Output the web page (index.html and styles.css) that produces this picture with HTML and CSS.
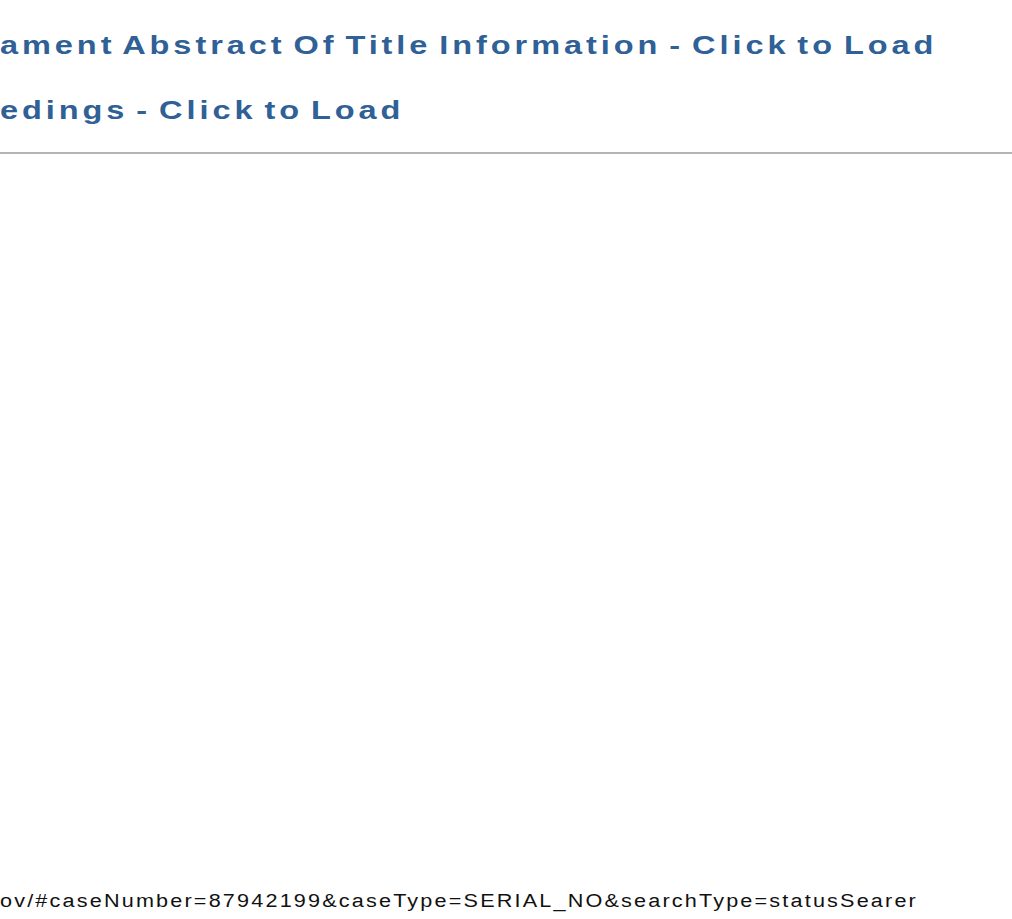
FILE: index.html
```html
<!DOCTYPE html>
<html>
<head>
<meta charset="utf-8">
<link rel="stylesheet" href="styles.css">
</head>
<body>
<div class="page">
  <section class="links">
    <h2 class="load-link">ament Abstract Of Title Information - Click to Load</h2>
    <h2 class="load-link">edings - Click to Load</h2>
  </section>
  <hr class="rule">
  <div class="spacer"></div>
  <p class="url">ov/#caseNumber=87942199&amp;caseType=SERIAL_NO&amp;searchType=statusSearer</p>
</div>
</body>
</html>
```
FILE: styles.css
```css
html, body {
  margin: 0;
  padding: 0;
  background: #ffffff;
}
.page {
  width: 1012px;
  height: 919px;
  display: flex;
  flex-direction: column;
  overflow: hidden;
}
.links {
  display: flex;
  flex-direction: column;
  gap: 39px;
  padding-top: 32px;
}
.load-link {
  margin: 0;
  font-family: "Liberation Sans", Arial, sans-serif;
  font-weight: bold;
  font-size: 26px;
  line-height: 26px;
  letter-spacing: 3.15px;
  word-spacing: -4px;
  color: #2f6096;
  white-space: nowrap;
  transform: scaleX(1.25);
  transform-origin: left center;
}
.rule {
  margin: 29px 0 0 0;
  border: 0;
  height: 2px;
  background: #b4b4b4;
}
.spacer {
  flex: 1;
}
.url {
  margin: 0 0 7px 0;
  font-family: "Liberation Sans", Arial, sans-serif;
  font-size: 18px;
  line-height: 22px;
  letter-spacing: 1.82px;
  color: #111111;
  white-space: nowrap;
  transform: scaleX(1.2);
  transform-origin: left center;
}
```
